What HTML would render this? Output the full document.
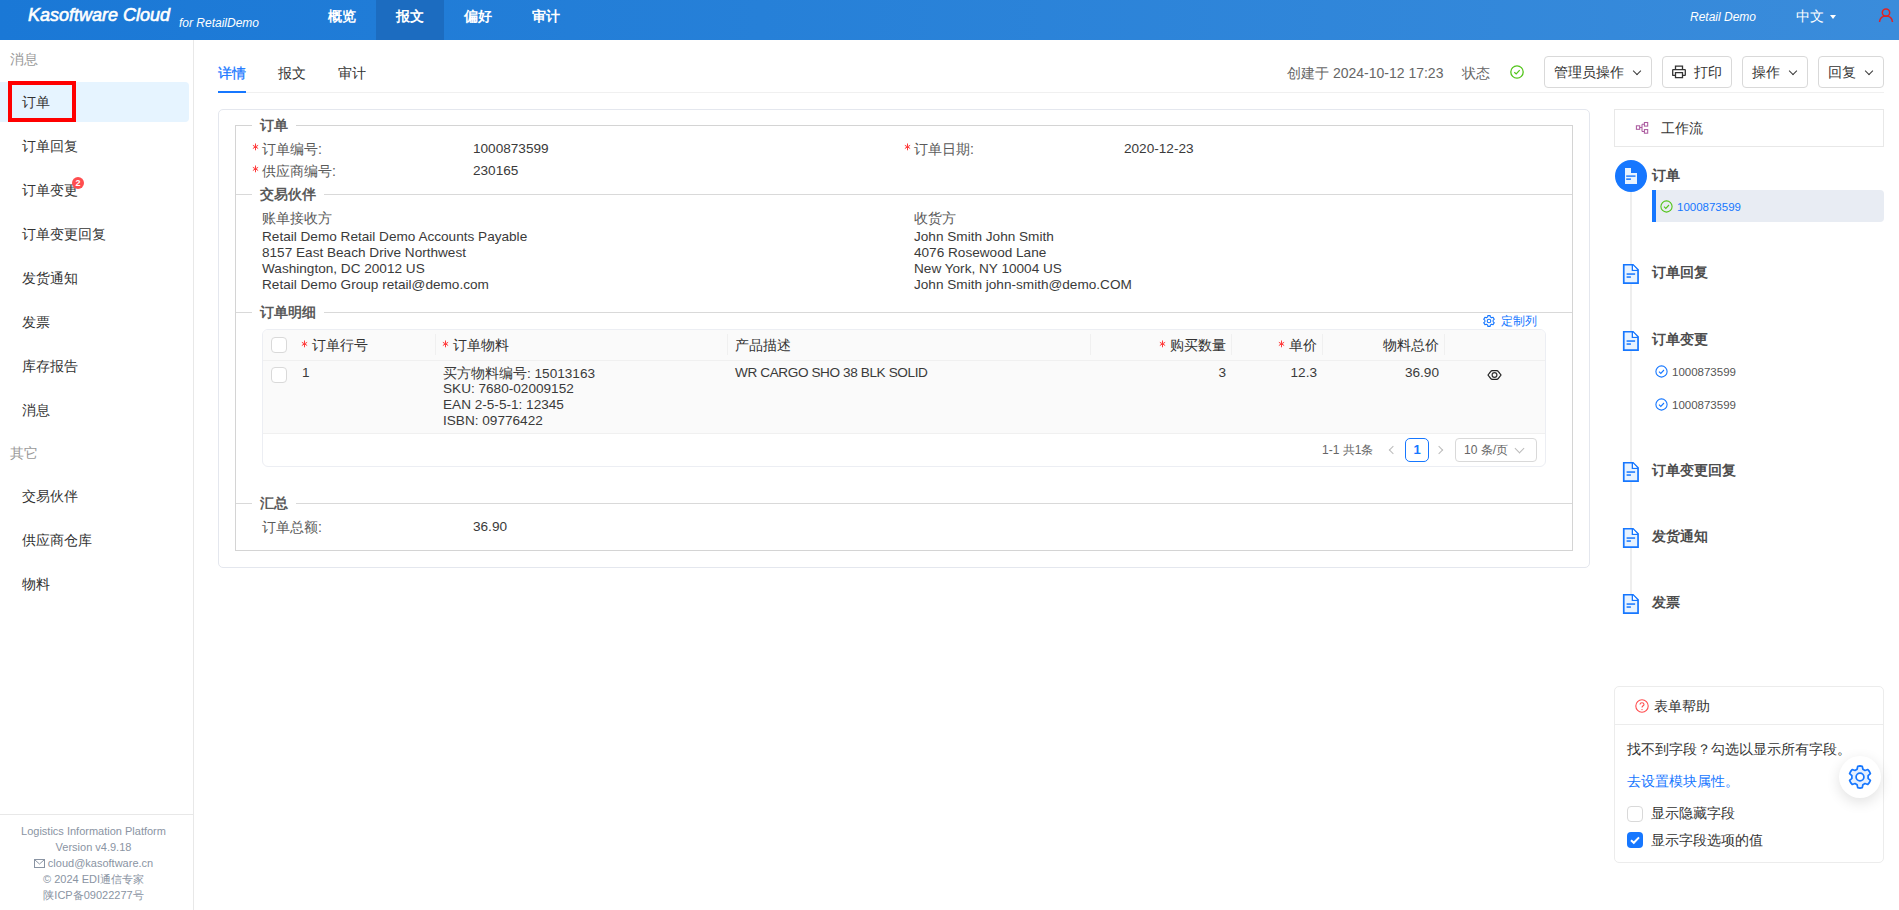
<!DOCTYPE html>
<html><head><meta charset="utf-8">
<style>
*{box-sizing:border-box;margin:0;padding:0}
html,body{width:1899px;height:910px;overflow:hidden;background:#fff}
body{font-family:"Liberation Sans",sans-serif;font-size:14px;color:#333;position:relative}
.a{position:absolute;white-space:nowrap}
.t{position:absolute;white-space:nowrap;line-height:16px;height:16px}
.l{font-size:13.6px}
#hdr{position:absolute;left:0;top:0;width:1899px;height:40px;background:linear-gradient(90deg,#1a78d6 0%,#2680d8 40%,#3a8cdb 100%)}
#hdr .t{color:#fff}
.nav{position:absolute;top:0;height:40px;width:68px;text-align:center;line-height:32px;color:#fff;font-weight:bold;font-size:14px}
.nav.on{background:#1c6cc0}
#side{position:absolute;left:0;top:40px;width:194px;height:870px;border-right:1px solid #e8e8e8}
.grp{color:#999}
.mi{color:#333}
.rq{color:#ff4d4f;font-size:15px;margin-top:2px}
.lab{color:#5a5a5a}
.val{color:#3a3a3a}
.leg{color:#5a5a5a;font-weight:bold;background:#fff;padding:0 8px}
.btn{position:absolute;top:56px;height:32px;border:1px solid #d9d9d9;border-radius:4px;background:#fff}
.chev{position:absolute;width:6px;height:6px;border-right:1.1px solid #3a3a3a;border-bottom:1.1px solid #3a3a3a;transform:rotate(45deg)}
.cb{position:absolute;width:16px;height:16px;border:1px solid #d9d9d9;border-radius:4px;background:#fff}
.wfi{position:absolute}
</style></head><body>

<!-- HEADER -->
<div id="hdr">
  <div class="a" style="left:28px;top:4px;font-size:18px;font-style:italic;color:#fff;line-height:22px;-webkit-text-stroke:0.6px #fff">Kasoftware Cloud</div>
  <div class="a" style="left:179px;top:15px;font-size:12px;font-style:italic;color:#fff;line-height:16px">for RetailDemo</div>
  <div class="nav" style="left:308px">概览</div>
  <div class="nav on" style="left:376px">报文</div>
  <div class="nav" style="left:444px">偏好</div>
  <div class="nav" style="left:512px">审计</div>
  <div class="a" style="left:1690px;top:9px;font-size:12px;font-style:italic;color:#fff;line-height:16px">Retail Demo</div>
  <div class="a" style="left:1796px;top:8px;font-size:14px;color:#fff;line-height:16px">中文</div>
  <div class="a" style="left:1830px;top:15px;width:0;height:0;border-left:3.5px solid transparent;border-right:3.5px solid transparent;border-top:4px solid #fff"></div>
  <svg class="a" style="left:1878px;top:7px" width="16" height="16" viewBox="0 0 16 16"><circle cx="8" cy="5.6" r="3.7" fill="none" stroke="#e02424" stroke-width="1.5"/><path d="M1.5 15 C2 10.5 5 9 8 9 C11 9 14 10.5 14.5 15" fill="none" stroke="#e02424" stroke-width="1.5"/></svg>
</div>

<!-- SIDEBAR -->
<div id="side"></div>
<div class="t grp" style="left:10px;top:51px">消息</div>
<div class="a" style="left:0;top:82px;width:189px;height:40px;background:#e6f4ff;border-radius:0 4px 4px 0"></div>
<div class="a" style="left:8px;top:81px;width:67.5px;height:40.5px;border:4px solid #ff0000"></div>
<div class="t mi" style="left:22px;top:94px">订单</div>
<div class="t mi" style="left:22px;top:138px">订单回复</div>
<div class="t mi" style="left:22px;top:182px">订单变更</div>
<div class="a" style="left:72px;top:177px;width:12px;height:12px;border-radius:6px;background:#ff4d4f;color:#fff;font-size:9px;font-weight:bold;line-height:12px;text-align:center">2</div>
<div class="t mi" style="left:22px;top:226px">订单变更回复</div>
<div class="t mi" style="left:22px;top:270px">发货通知</div>
<div class="t mi" style="left:22px;top:314px">发票</div>
<div class="t mi" style="left:22px;top:358px">库存报告</div>
<div class="t mi" style="left:22px;top:402px">消息</div>
<div class="t grp" style="left:10px;top:445px">其它</div>
<div class="t mi" style="left:22px;top:488px">交易伙伴</div>
<div class="t mi" style="left:22px;top:532px">供应商仓库</div>
<div class="t mi" style="left:22px;top:576px">物料</div>
<div class="a" style="left:0;top:814px;width:193px;height:1px;background:#e8e8e8"></div>
<div class="a" style="left:-3px;top:823px;width:193px;text-align:center;font-size:11px;line-height:16px;color:#8a94a3">Logistics Information Platform<br>Version v4.9.18<br><svg width="11" height="9" viewBox="0 0 11 9" style="vertical-align:-1px"><rect x="0.5" y="0.5" width="10" height="8" fill="none" stroke="#8a94a3" stroke-width="1"/><path d="M0.8 0.8 L5.5 5 L10.2 0.8" fill="none" stroke="#8a94a3" stroke-width="1"/></svg> cloud@kasoftware.cn<br>© 2024 EDI通信专家<br>陕ICP备09022277号</div>

<!-- MAIN TOP BAR -->
<div class="t" style="left:218px;top:65px;color:#1677ff;-webkit-text-stroke:0.25px #1677ff">详情</div>
<div class="a" style="left:218px;top:91px;width:28px;height:2px;background:#1677ff"></div>
<div class="t" style="left:278px;top:65px;color:#333">报文</div>
<div class="t" style="left:338px;top:65px;color:#333">审计</div>
<div class="a" style="left:218px;top:92px;width:1666px;height:1px;background:#f0f0f0"></div>
<div class="a" style="left:218px;top:91px;width:28px;height:2px;background:#1677ff"></div>

<div class="t" style="left:1287px;top:65px;color:#666">创建于 2024-10-12 17:23</div>
<div class="t" style="left:1462px;top:65px;color:#666">状态</div>
<svg class="a" style="left:1510px;top:65px" width="14" height="14" viewBox="0 0 14 14"><circle cx="7" cy="7" r="6.2" fill="none" stroke="#52c41a" stroke-width="1.3"/><path d="M4.3 7.2 L6.2 9 L9.7 5.2" fill="none" stroke="#52c41a" stroke-width="1.2"/></svg>

<div class="btn" style="left:1544px;width:108px"></div>
<div class="t" style="left:1554px;top:64px;color:#333">管理员操作</div>
<div class="chev" style="left:1634px;top:68px"></div>
<div class="btn" style="left:1662px;width:70px"></div>
<svg class="a" style="left:1672px;top:65px" width="14" height="14" viewBox="0 0 14 14"><path d="M3.5 4.6 V1.2 H10.5 V4.6 M3.5 10.4 H1 Q0.7 10.4 0.7 10 V5.1 Q0.7 4.6 1.2 4.6 H12.8 Q13.3 4.6 13.3 5.1 V10 Q13.3 10.4 13 10.4 H10.5 M3.5 7.6 H10.5 V12.6 H3.5 Z" fill="none" stroke="#333" stroke-width="1.3"/></svg>
<div class="t" style="left:1694px;top:64px;color:#333">打印</div>
<div class="btn" style="left:1742px;width:66px"></div>
<div class="t" style="left:1752px;top:64px;color:#333">操作</div>
<div class="chev" style="left:1790px;top:68px"></div>
<div class="btn" style="left:1818px;width:66px"></div>
<div class="t" style="left:1828px;top:64px;color:#333">回复</div>
<div class="chev" style="left:1866px;top:68px"></div>

<!-- CARD -->
<div class="a" style="left:218px;top:109px;width:1372px;height:459px;border:1px solid #e4e7ee;border-radius:5px"></div>
<div class="a" style="left:235px;top:125px;width:1338px;height:426px;border:1px solid #d4d4d4"></div>
<div class="a" style="left:236px;top:194px;width:1336px;height:1px;background:#d9d9d9"></div>
<div class="a" style="left:236px;top:312px;width:1336px;height:1px;background:#d9d9d9"></div>
<div class="a" style="left:236px;top:503px;width:1336px;height:1px;background:#d9d9d9"></div>

<div class="t leg" style="left:252px;top:117px">订单</div>
<div class="t leg" style="left:252px;top:186px">交易伙伴</div>
<div class="t leg" style="left:252px;top:304px">订单明细</div>
<div class="t leg" style="left:252px;top:495px">汇总</div>

<div class="a" style="left:252px;top:143px"><svg width="7" height="8" viewBox="0 0 7 8" style="display:block"><path d="M3.5 0.9V6.9M1.2 2.5L5.8 5.3M1.2 5.3L5.8 2.5" stroke="#ff3b3b" stroke-width="1" stroke-linecap="round" fill="none"/></svg></div>
<div class="t lab" style="left:262px;top:141px">订单编号:</div>
<div class="t val l" style="left:473px;top:141px">1000873599</div>
<div class="a" style="left:252px;top:165px"><svg width="7" height="8" viewBox="0 0 7 8" style="display:block"><path d="M3.5 0.9V6.9M1.2 2.5L5.8 5.3M1.2 5.3L5.8 2.5" stroke="#ff3b3b" stroke-width="1" stroke-linecap="round" fill="none"/></svg></div>
<div class="t lab" style="left:262px;top:163px">供应商编号:</div>
<div class="t val l" style="left:473px;top:163px">230165</div>
<div class="a" style="left:904px;top:143px"><svg width="7" height="8" viewBox="0 0 7 8" style="display:block"><path d="M3.5 0.9V6.9M1.2 2.5L5.8 5.3M1.2 5.3L5.8 2.5" stroke="#ff3b3b" stroke-width="1" stroke-linecap="round" fill="none"/></svg></div>
<div class="t lab" style="left:914px;top:141px">订单日期:</div>
<div class="t val l" style="left:1124px;top:141px">2020-12-23</div>

<div class="t lab" style="left:262px;top:210px">账单接收方</div>
<div class="a val l" style="left:262px;top:229px;line-height:16px">Retail Demo Retail Demo Accounts Payable<br>8157 East Beach Drive Northwest<br>Washington, DC 20012 US<br>Retail Demo Group retail@demo.com</div>
<div class="t lab" style="left:914px;top:210px">收货方</div>
<div class="a val l" style="left:914px;top:229px;line-height:16px">John Smith John Smith<br>4076 Rosewood Lane<br>New York, NY 10004 US<br>John Smith john-smith@demo.COM</div>

<!-- TABLE -->
<div class="t" style="left:1483px;top:313px;color:#1677ff">
</div>
<svg class="a" style="left:1483px;top:315px" width="12" height="12" viewBox="0 0 12 12"><path d="M4.66 2.02 L4.80 0.63 L7.20 0.63 L7.34 2.02 L8.78 2.85 L10.05 2.28 L11.25 4.36 L10.12 5.17 L10.12 6.83 L11.25 7.64 L10.05 9.72 L8.78 9.15 L7.34 9.98 L7.20 11.37 L4.80 11.37 L4.66 9.98 L3.22 9.15 L1.95 9.72 L0.75 7.64 L1.88 6.83 L1.88 5.17 L0.75 4.36 L1.95 2.28 L3.22 2.85 Z" fill="none" stroke="#1677ff" stroke-width="1.1" stroke-linejoin="round"/><circle cx="6" cy="6" r="1.8" fill="none" stroke="#1677ff" stroke-width="1.1"/></svg>
<div class="t" style="left:1501px;top:313px;color:#1677ff;font-size:12px">定制列</div>

<div class="a" style="left:262px;top:329px;width:1284px;height:138px;border:1px solid #eceef3;border-radius:6px;overflow:hidden">
  <div class="a" style="left:0;top:0;width:1282px;height:31px;background:#fafafa;border-bottom:1px solid #f0f0f0"></div>
  <div class="a" style="left:0;top:31px;width:1282px;height:73px;background:#fafafa;border-bottom:1px solid #f0f0f0"></div>
</div>
<div class="a" style="left:435px;top:334px;width:1px;height:21px;background:#f0f0f0"></div>
<div class="a" style="left:727px;top:334px;width:1px;height:21px;background:#f0f0f0"></div>
<div class="a" style="left:1090px;top:334px;width:1px;height:21px;background:#f0f0f0"></div>
<div class="a" style="left:1231px;top:334px;width:1px;height:21px;background:#f0f0f0"></div>
<div class="a" style="left:1322px;top:334px;width:1px;height:21px;background:#f0f0f0"></div>
<div class="a" style="left:1444px;top:334px;width:1px;height:21px;background:#f0f0f0"></div>
<div class="cb" style="left:271px;top:337px"></div>
<div class="a" style="left:301px;top:340px"><svg width="7" height="8" viewBox="0 0 7 8" style="display:block"><path d="M3.5 0.9V6.9M1.2 2.5L5.8 5.3M1.2 5.3L5.8 2.5" stroke="#ff3b3b" stroke-width="1" stroke-linecap="round" fill="none"/></svg></div>
<div class="t" style="left:312px;top:337px;color:#333">订单行号</div>
<div class="a" style="left:442px;top:340px"><svg width="7" height="8" viewBox="0 0 7 8" style="display:block"><path d="M3.5 0.9V6.9M1.2 2.5L5.8 5.3M1.2 5.3L5.8 2.5" stroke="#ff3b3b" stroke-width="1" stroke-linecap="round" fill="none"/></svg></div>
<div class="t" style="left:453px;top:337px;color:#333">订单物料</div>
<div class="t" style="left:735px;top:337px;color:#333">产品描述</div>
<div class="a" style="left:1159px;top:340px"><svg width="7" height="8" viewBox="0 0 7 8" style="display:block"><path d="M3.5 0.9V6.9M1.2 2.5L5.8 5.3M1.2 5.3L5.8 2.5" stroke="#ff3b3b" stroke-width="1" stroke-linecap="round" fill="none"/></svg></div>
<div class="t" style="left:1170px;top:337px;color:#333">购买数量</div>
<div class="a" style="left:1278px;top:340px"><svg width="7" height="8" viewBox="0 0 7 8" style="display:block"><path d="M3.5 0.9V6.9M1.2 2.5L5.8 5.3M1.2 5.3L5.8 2.5" stroke="#ff3b3b" stroke-width="1" stroke-linecap="round" fill="none"/></svg></div>
<div class="t" style="left:1289px;top:337px;color:#333">单价</div>
<div class="t" style="left:1383px;top:337px;color:#333">物料总价</div>

<div class="cb" style="left:271px;top:367px"></div>
<div class="t val l" style="left:302px;top:365px">1</div>
<div class="t val" style="left:443px;top:365px">买方物料编号<span class="l">: 15013163</span></div><div class="t val l" style="left:443px;top:381px">SKU: 7680-02009152</div><div class="t val l" style="left:443px;top:397px">EAN 2-5-5-1: 12345</div><div class="t val l" style="left:443px;top:413px">ISBN: 09776422</div>
<div class="t val l" style="left:735px;top:365px;letter-spacing:-0.4px">WR CARGO SHO 38 BLK SOLID</div>
<div class="t val l" style="left:1160px;top:365px;width:66px;text-align:right">3</div>
<div class="t val l" style="left:1250px;top:365px;width:67px;text-align:right">12.3</div>
<div class="t val l" style="left:1350px;top:365px;width:89px;text-align:right">36.90</div>
<svg class="a" style="left:1487px;top:368px" width="15" height="14" viewBox="0 0 15 14"><path d="M1 7 L3.6 3.6 Q4.2 2.6 5.5 2.6 H9.5 Q10.8 2.6 11.4 3.6 L14 7 L11.4 10.4 Q10.8 11.4 9.5 11.4 H5.5 Q4.2 11.4 3.6 10.4 Z" fill="none" stroke="#222" stroke-width="1.2"/><circle cx="7.5" cy="7" r="2.4" fill="none" stroke="#333" stroke-width="1.2"/></svg>

<div class="t" style="left:1322px;top:442px;color:#666;font-size:12px">1-1 共1条</div>
<div class="a" style="left:1390px;top:447px;width:6px;height:6px;border-left:1px solid #bbb;border-bottom:1px solid #bbb;transform:rotate(45deg)"></div>
<div class="a" style="left:1405px;top:438px;width:24px;height:24px;border:1px solid #1677ff;border-radius:5px;color:#1677ff;font-weight:bold;text-align:center;line-height:22px;font-size:13px">1</div>
<div class="a" style="left:1436px;top:447px;width:6px;height:6px;border-right:1px solid #bbb;border-top:1px solid #bbb;transform:rotate(45deg)"></div>
<div class="a" style="left:1455px;top:438px;width:82px;height:24px;border:1px solid #d9d9d9;border-radius:4px"></div>
<div class="t" style="left:1464px;top:442px;color:#666;font-size:12px">10 条/页</div>
<div class="a" style="left:1516px;top:445px;width:7px;height:7px;border-right:1px solid #bbb;border-bottom:1px solid #bbb;transform:rotate(45deg)"></div>

<div class="t lab" style="left:262px;top:519px">订单总额:</div>
<div class="t val l" style="left:473px;top:519px">36.90</div>

<!-- RIGHT PANEL -->
<div class="a" style="left:1614px;top:109px;width:270px;height:38px;border:1px solid #e8e8e8"></div>
<svg class="a" style="left:1635px;top:121px" width="14" height="14" viewBox="0 0 14 14"><g fill="none" stroke="#ab5a9f" stroke-width="1.05"><rect x="1.4" y="4.8" width="3.3" height="3.5"/><rect x="9.4" y="1.5" width="3.3" height="3.6"/><rect x="9.4" y="8.6" width="3.3" height="3.6"/><path d="M4.7 6.5 H7 M7 3.3 V10.4 M7 3.3 H9.4 M7 10.4 H9.4"/></g></svg>
<div class="t" style="left:1661px;top:120px;color:#333">工作流</div>

<div class="a" style="left:1630px;top:192px;width:2px;height:404px;background:#eeeeee"></div>
<div class="a" style="left:1615px;top:160px;width:32px;height:32px;border-radius:16px;background:#1677ff"></div>
<svg class="a" style="left:1625px;top:168px" width="12" height="16" viewBox="0 0 12 16"><path d="M0 0 H6 V5 H12 V16 H0 Z" fill="#e8f3ff"/><rect x="1.2" y="7.4" width="9.3" height="1.4" fill="#1677ff"/><rect x="1.2" y="10.4" width="4.7" height="1.5" fill="#1677ff"/></svg>
<div class="t" style="left:1652px;top:167px;color:#4d4d4d;font-weight:bold">订单</div>
<div class="a" style="left:1652px;top:190px;width:232px;height:32px;background:#e8ecf3;border-left:4px solid #1677ff;border-radius:0 4px 4px 0"></div>
<svg class="a" style="left:1660px;top:200px" width="13" height="13" viewBox="0 0 13 13"><circle cx="6.5" cy="6.5" r="5.6" fill="none" stroke="#52c41a" stroke-width="1.1"/><path d="M4 6.7 L5.8 8.4 L9 5" fill="none" stroke="#52c41a" stroke-width="1.1"/></svg>
<div class="t" style="left:1677px;top:199px;color:#1677ff;font-size:11.5px">1000873599</div>

<svg class="a" style="left:1622px;top:263px" width="18" height="22" viewBox="0 0 18 22"><path d="M1.75 1.75 H11 L16.05 6.8 V20.05 H1.75 Z" fill="#e8f3ff" stroke="#1677ff" stroke-width="1.7"/><path d="M10.5 1.75 V7.2 H16.05" fill="none" stroke="#1677ff" stroke-width="1.6"/><path d="M11 2.6 L15.2 6.8 H11 Z" fill="#fff"/><rect x="4.6" y="10.3" width="8.5" height="1.5" fill="#1677ff"/><rect x="4.6" y="13.3" width="4.3" height="1.5" fill="#1677ff"/></svg><svg class="a" style="left:1622px;top:330px" width="18" height="22" viewBox="0 0 18 22"><path d="M1.75 1.75 H11 L16.05 6.8 V20.05 H1.75 Z" fill="#e8f3ff" stroke="#1677ff" stroke-width="1.7"/><path d="M10.5 1.75 V7.2 H16.05" fill="none" stroke="#1677ff" stroke-width="1.6"/><path d="M11 2.6 L15.2 6.8 H11 Z" fill="#fff"/><rect x="4.6" y="10.3" width="8.5" height="1.5" fill="#1677ff"/><rect x="4.6" y="13.3" width="4.3" height="1.5" fill="#1677ff"/></svg><svg class="a" style="left:1622px;top:461px" width="18" height="22" viewBox="0 0 18 22"><path d="M1.75 1.75 H11 L16.05 6.8 V20.05 H1.75 Z" fill="#e8f3ff" stroke="#1677ff" stroke-width="1.7"/><path d="M10.5 1.75 V7.2 H16.05" fill="none" stroke="#1677ff" stroke-width="1.6"/><path d="M11 2.6 L15.2 6.8 H11 Z" fill="#fff"/><rect x="4.6" y="10.3" width="8.5" height="1.5" fill="#1677ff"/><rect x="4.6" y="13.3" width="4.3" height="1.5" fill="#1677ff"/></svg><svg class="a" style="left:1622px;top:527px" width="18" height="22" viewBox="0 0 18 22"><path d="M1.75 1.75 H11 L16.05 6.8 V20.05 H1.75 Z" fill="#e8f3ff" stroke="#1677ff" stroke-width="1.7"/><path d="M10.5 1.75 V7.2 H16.05" fill="none" stroke="#1677ff" stroke-width="1.6"/><path d="M11 2.6 L15.2 6.8 H11 Z" fill="#fff"/><rect x="4.6" y="10.3" width="8.5" height="1.5" fill="#1677ff"/><rect x="4.6" y="13.3" width="4.3" height="1.5" fill="#1677ff"/></svg><svg class="a" style="left:1622px;top:593px" width="18" height="22" viewBox="0 0 18 22"><path d="M1.75 1.75 H11 L16.05 6.8 V20.05 H1.75 Z" fill="#e8f3ff" stroke="#1677ff" stroke-width="1.7"/><path d="M10.5 1.75 V7.2 H16.05" fill="none" stroke="#1677ff" stroke-width="1.6"/><path d="M11 2.6 L15.2 6.8 H11 Z" fill="#fff"/><rect x="4.6" y="10.3" width="8.5" height="1.5" fill="#1677ff"/><rect x="4.6" y="13.3" width="4.3" height="1.5" fill="#1677ff"/></svg>
<div class="t" style="left:1652px;top:264px;color:#4d4d4d;font-weight:bold">订单回复</div>
<div class="t" style="left:1652px;top:331px;color:#4d4d4d;font-weight:bold">订单变更</div>
<svg class="a" style="left:1655px;top:364.5px" width="13" height="13" viewBox="0 0 13 13"><circle cx="6.5" cy="6.5" r="5.6" fill="none" stroke="#1677ff" stroke-width="1.1"/><path d="M4 6.7 L5.8 8.4 L9 5" fill="none" stroke="#1677ff" stroke-width="1.1"/></svg>
<div class="t" style="left:1672px;top:364px;color:#555;font-size:11.5px">1000873599</div>
<svg class="a" style="left:1655px;top:397.5px" width="13" height="13" viewBox="0 0 13 13"><circle cx="6.5" cy="6.5" r="5.6" fill="none" stroke="#1677ff" stroke-width="1.1"/><path d="M4 6.7 L5.8 8.4 L9 5" fill="none" stroke="#1677ff" stroke-width="1.1"/></svg>
<div class="t" style="left:1672px;top:397px;color:#555;font-size:11.5px">1000873599</div>
<div class="t" style="left:1652px;top:462px;color:#4d4d4d;font-weight:bold">订单变更回复</div>
<div class="t" style="left:1652px;top:528px;color:#4d4d4d;font-weight:bold">发货通知</div>
<div class="t" style="left:1652px;top:594px;color:#4d4d4d;font-weight:bold">发票</div>

<!-- HELP -->
<div class="a" style="left:1614px;top:686px;width:270px;height:177px;border:1px solid #ececec;border-radius:5px"></div>
<div class="a" style="left:1615px;top:724px;width:268px;height:1px;background:#ececec"></div>
<svg class="a" style="left:1635px;top:699px" width="14" height="14" viewBox="0 0 14 14"><circle cx="7" cy="7" r="6.2" fill="none" stroke="#ff4d4f" stroke-width="1.1"/><path d="M5 5.4 C5 3.2 9 3.2 9 5.4 C9 6.8 7 6.8 7 8.6" fill="none" stroke="#ff4d4f" stroke-width="1.1"/><circle cx="7" cy="10.6" r="0.7" fill="#ff4d4f"/></svg>
<div class="t" style="left:1654px;top:698px;color:#333">表单帮助</div>
<div class="t" style="left:1627px;top:741px;color:#333">找不到字段？勾选以显示所有字段。</div>
<div class="t" style="left:1627px;top:773px;color:#1677ff">去设置模块属性。</div>
<div class="cb" style="left:1627px;top:806px"></div>
<div class="t" style="left:1651px;top:805px;color:#333">显示隐藏字段</div>
<div class="a" style="left:1627px;top:832px;width:16px;height:16px;border-radius:4px;background:#1677ff"></div>
<svg class="a" style="left:1627px;top:832px" width="16" height="16" viewBox="0 0 16 16"><path d="M4 8.2 L6.8 10.8 L12 5.4" fill="none" stroke="#fff" stroke-width="2"/></svg>
<div class="t" style="left:1651px;top:832px;color:#333">显示字段选项的值</div>

<div class="a" style="left:1839px;top:756px;width:42px;height:42px;border-radius:21px;background:#fff;box-shadow:0 4px 14px rgba(0,0,0,0.12)"></div>
<svg class="a" style="left:1847px;top:764px" width="26" height="26" viewBox="0 0 24 24"><path d="M12 1.8 L14.1 2.2 L14.7 4.9 L16.6 6 L19.2 5.1 L20.6 6.8 L21.6 8.8 L19.5 10.7 V13.3 L21.6 15.2 L20.6 17.2 L19.2 18.9 L16.6 18 L14.7 19.1 L14.1 21.8 L12 22.2 L9.9 21.8 L9.3 19.1 L7.4 18 L4.8 18.9 L3.4 17.2 L2.4 15.2 L4.5 13.3 V10.7 L2.4 8.8 L3.4 6.8 L4.8 5.1 L7.4 6 L9.3 4.9 L9.9 2.2 Z" fill="#e6f0ff" stroke="#1677ff" stroke-width="1.6" stroke-linejoin="round"/><circle cx="12" cy="12" r="3.6" fill="#fff" stroke="#1677ff" stroke-width="1.6"/></svg>

</body></html>
